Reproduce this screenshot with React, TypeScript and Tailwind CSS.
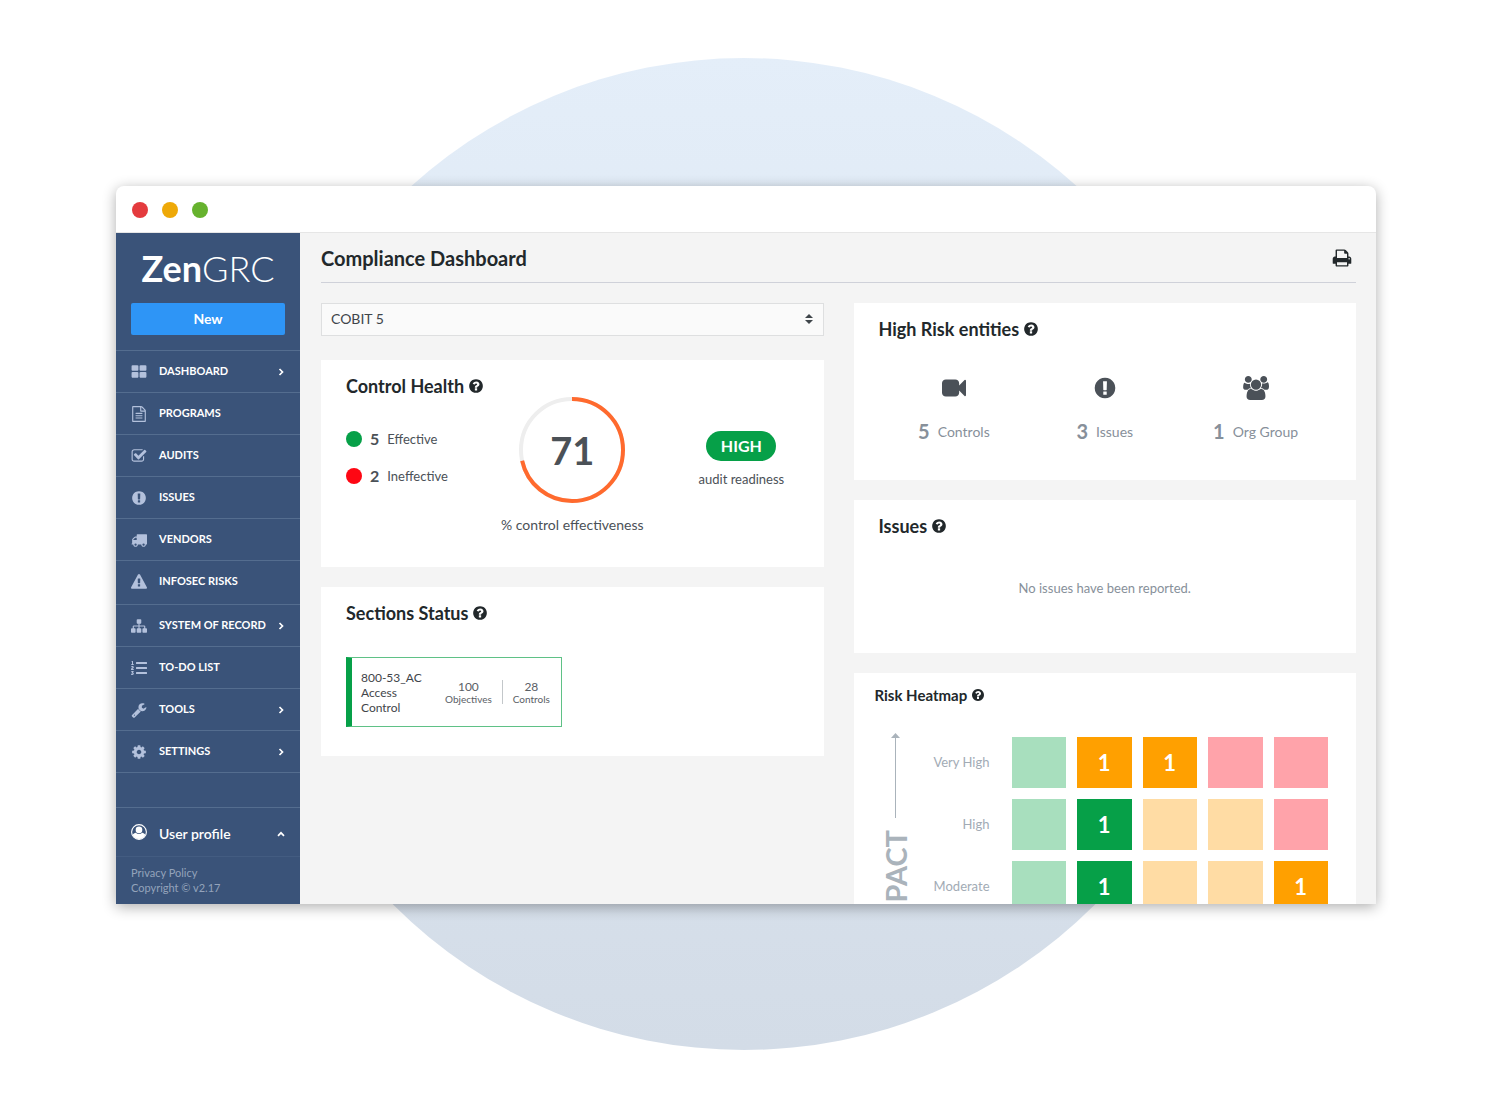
import type { ReactNode } from "react";
import { FaListOl } from "react-icons/fa";

const paths = {
  question:
    "M1024 1376v-192q0-14-9-23t-23-9h-192q-14 0-23 9t-9 23v192q0 14 9 23t23 9h192q14 0 23-9t9-23zm256-672q0-88-55.5-163t-138.5-116-170-41q-243 0-371 213-15 24 8 42l132 100q7 6 19 6 16 0 25-12 53-68 86-92 34-24 86-24 48 0 85.5 26t37.5 59q0 38-20 61t-68 45q-63 28-115.5 86.5t-52.5 125.5v36q0 14 9 23t23 9h192q14 0 23-9t9-23q0-19 21.5-49.5t54.5-49.5q32-18 49-28.5t46-35 44.5-48 28-60.5 12.5-81zm384 192q0 209-103 385.5t-279.5 279.5-385.5 103-385.5-103-279.5-279.5-103-385.5 103-385.5 279.5-279.5 385.5-103 385.5 103 279.5 279.5 103 385.5z",
  exclamation:
    "M896 128q209 0 385.5 103t279.5 279.5 103 385.5-103 385.5-279.5 279.5-385.5 103-385.5-103-279.5-279.5-103-385.5 103-385.5 279.5-279.5 385.5-103zm128 1247v-190q0-14-9-23.5t-22-9.5h-192q-13 0-23 10t-10 23v190q0 13 10 23t23 10h192q13 0 22-9.5t9-23.5zm-2-344l18-621q0-12-10-18-10-8-24-8h-220q-14 0-24 8-10 6-10 18l17 621q0 10 10 17.5t24 7.5h185q14 0 23.5-7.5t10.5-17.5z",
  tiles:
    "M832 1024v384q0 52-38 90t-90 38h-512q-52 0-90-38t-38-90v-384q0-52 38-90t90-38h512q52 0 90 38t38 90zm0-768v384q0 52-38 90t-90 38h-512q-52 0-90-38t-38-90v-384q0-52 38-90t90-38h512q52 0 90 38t38 90zm896 768v384q0 52-38 90t-90 38h-512q-52 0-90-38t-38-90v-384q0-52 38-90t90-38h512q52 0 90 38t38 90zm0-768v384q0 52-38 90t-90 38h-512q-52 0-90-38t-38-90v-384q0-52 38-90t90-38h512q52 0 90 38t38 90z",
  file: "M1596 380q28 28 48 76t20 88v1152q0 40-28 68t-68 28h-1344q-40 0-68-28t-28-68v-1600q0-40 28-68t68-28h896q40 0 88 20t76 48zm-444-244v376h376q-10-29-22-41l-313-313q-12-12-41-22zm384 1528v-1024h-416q-40 0-68-28t-28-68v-416h-768v1536h1280zm-1024-864q0-14 9-23t23-9h704q14 0 23 9t9 23v64q0 14-9 23t-23 9h-704q-14 0-23-9t-9-23v-64zm736 224q14 0 23 9t9 23v64q0 14-9 23t-23 9h-704q-14 0-23-9t-9-23v-64q0-14 9-23t23-9h704zm0 256q14 0 23 9t9 23v64q0 14-9 23t-23 9h-704q-14 0-23-9t-9-23v-64q0-14 9-23t23-9h704z",
  check:
    "M1472 930v318q0 119-84.5 203.5t-203.5 84.5h-832q-119 0-203.5-84.5t-84.5-203.5v-832q0-119 84.5-203.5t203.5-84.5h832q63 0 117 25 15 7 18 23 3 17-9 29l-49 49q-10 10-23 10-3 0-9-2-23-6-45-6h-832q-66 0-113 47t-47 113v832q0 66 47 113t113 47h832q66 0 113-47t47-113v-254q0-13 9-22l64-64q10-10 23-10 6 0 12 3 20 8 20 29zm231-489l-814 814q-24 24-57 24t-57-24l-430-430q-24-24-24-57t24-57l110-110q24-24 57-24t57 24l263 263 647-647q24-24 57-24t57 24l110 110q24 24 24 57t-24 57z",
  truck:
    "M640 1408q0-52-38-90t-90-38-90 38-38 90 38 90 90 38 90-38 38-90zm-384-512h384v-256h-158q-13 0-22 9l-195 195q-9 9-9 22v30zm1280 512q0-52-38-90t-90-38-90 38-38 90 38 90 90 38 90-38 38-90zm256-1088v1024q0 15-4 26.5t-13.5 18.5-16.5 11.5-23.5 6-22.5 2-25.5 0-22.5-.5q0 106-75 181t-181 75-181-75-75-181h-384q0 106-75 181t-181 75-181-75-75-181h-64q-3 0-22.5.5t-25.5 0-22.5-2-23.5-6-16.5-11.5-13.5-18.5-4-26.5q0-26 19-45t45-19v-320q0-8-.5-35t0-38 2.5-34.5 6.5-37 14-30.5 22.5-30l198-198q19-19 50.5-32t58.5-13h160v-192q0-26 19-45t45-19h1024q26 0 45 19t19 45z",
  warning:
    "M1024 1375v-190q0-14-9.5-23.5t-22.5-9.5h-192q-13 0-22.5 9.5t-9.5 23.5v190q0 14 9.5 23.5t22.5 9.5h192q13 0 22.5-9.5t9.5-23.5zm-2-374l18-459q0-12-10-19-13-11-24-11h-220q-11 0-24 11-10 7-10 21l17 457q0 10 10 16.5t24 6.5h185q14 0 23.5-6.5t10.5-16.5zm-14-934l768 1408q35 63-2 126-17 29-46.5 46t-63.5 17h-1536q-34 0-63.5-17t-46.5-46q-37-63-2-126l768-1408q17-31 47-49t65-18 65 18 47 49z",
  sitemap:
    "M1792 1248v320q0 40-28 68t-68 28h-320q-40 0-68-28t-28-68v-320q0-40 28-68t68-28h96v-192h-512v192h96q40 0 68 28t28 68v320q0 40-28 68t-68 28h-320q-40 0-68-28t-28-68v-320q0-40 28-68t68-28h96v-192h-512v192h96q40 0 68 28t28 68v320q0 40-28 68t-68 28h-320q-40 0-68-28t-28-68v-320q0-40 28-68t68-28h96v-192q0-52 38-90t90-38h512v-192h-96q-40 0-68-28t-28-68v-320q0-40 28-68t68-28h320q40 0 68 28t28 68v320q0 40-28 68t-68 28h-96v192h512q52 0 90 38t38 90v192h96q40 0 68 28t28 68z",
  wrench:
    "M448 1472q0-26-19-45t-45-19-45 19-19 45 19 45 45 19 45-19 19-45zm644-420l-682 682q-37 37-90 37-52 0-91-37l-106-108q-38-36-38-90 0-53 38-91l681-681q39 98 114.5 173.5t173.5 114.5zm634-435q0 39-23 106-47 134-164.5 217.5t-258.5 83.5q-185 0-316.5-131.5t-131.5-316.5 131.5-316.5 316.5-131.5q58 0 121.5 16.5t107.5 46.5q16 11 16 28t-16 28l-293 169v224l193 107q5-3 79-48.5t135.5-81 70.5-35.5q15 0 23.5 10t8.5 25z",
  cog: "M1152 896q0-106-75-181t-181-75-181 75-75 181 75 181 181 75 181-75 75-181zm512-109v222q0 12-8 23t-20 13l-185 28q-19 54-39 91 35 50 107 138 10 12 10 25t-9 23q-27 37-99 108t-94 71q-12 0-26-9l-138-108q-44 23-91 38-16 136-29 186-7 28-36 28h-222q-14 0-24.5-8.5t-11.5-21.5l-28-184q-49-16-90-37l-141 107q-10 9-25 9-14 0-25-11-126-114-165-168-7-10-7-23 0-12 8-23 15-21 51-66.5t54-70.5q-27-50-41-99l-183-27q-13-2-21-12.5t-8-23.5v-222q0-12 8-23t19-13l186-28q14-46 39-92-40-57-107-138-10-12-10-24 0-10 9-23 26-36 98.5-107.5t94.5-71.5q13 0 26 10l138 107q44-23 91-38 16-136 29-186 7-28 36-28h222q14 0 24.5 8.5t11.5 21.5l28 184q49 16 90 37l142-107q9-9 24-9 13 0 25 10 129 119 165 170 7 8 7 22 0 12-8 23-15 21-51 66.5t-54 70.5q26 50 41 98l183 28q13 2 21 12.5t8 23.5z",
  video:
    "M1792 352v1088q0 42-39 59-13 5-25 5-27 0-45-19l-403-403v166q0 119-84.5 203.5t-203.5 84.5h-704q-119 0-203.5-84.5t-84.5-203.5v-704q0-119 84.5-203.5t203.5-84.5h704q119 0 203.5 84.5t84.5 203.5v165l403-402q18-19 45-19 12 0 25 5 39 17 39 59z",
  print:
    "M448 1536h896v-256h-896v256zm0-640h896v-384h-160q-40 0-68-28t-28-68v-160h-640v640zm1152 64q0-26-19-45t-45-19-45 19-19 45 19 45 45 19 45-19 19-45zm128 0v416q0 13-9.5 22.5t-22.5 9.5h-224v160q0 40-28 68t-68 28h-960q-40 0-68-28t-28-68v-160h-224q-13 0-22.5-9.5t-9.5-22.5v-416q0-79 56.5-135.5t135.5-56.5h64v-544q0-40 28-68t68-28h672q40 0 88 20t76 48l152 152q28 28 48 76t20 88v256h64q79 0 135.5 56.5t56.5 135.5z",
  users:
    "M657 896q-162 5-265 128h-134q-82 0-138-40.5t-56-118.5q0-353 124-353 6 0 43.5 21t97.5 42.5 119 21.5q67 0 133-23-5 37-5 66 0 159 93 293zm1071 637q0 120-73 189.5t-194 69.5h-874q-121 0-194-69.5t-73-189.5q0-53 3.5-103.5t14-109 26.5-108.5 43-97.5 62-81 85.5-53.5 111.5-20q10 0 43 21.5t73 48 107 48 135 21.5 135-21.5 107-48 73-48 43-21.5q61 0 111.5 20t85.5 53.5 62 81 43 97.5 26.5 108.5 14 109 3.5 103.5zm-1024-1277q0 106-75 181t-181 75-181-75-75-181 75-181 181-75 181 75 75 181zm704 384q0 159-112.5 271.5t-271.5 112.5-271.5-112.5-112.5-271.5 112.5-271.5 271.5-112.5 271.5 112.5 112.5 271.5zm576 225q0 78-56 118.5t-138 40.5h-134q-103-123-265-128 93-134 93-293 0-29-5-66 66 23 133 23 59 0 119-21.5t97.5-42.5 43.5-21q124 0 124 353zm-128-609q0 106-75 181t-181 75-181-75-75-181 75-181 181-75 181 75 75 181z",
};

type IconName = keyof typeof paths;

function Icon({ name, className }: { name: IconName; className: string }) {
  return (
    <svg
      viewBox={name === "users" ? "0 0 2048 1792" : "0 0 1792 1792"}
      className={className}
      fill="currentColor"
      aria-hidden="true"
    >
      <path d={paths[name]} />
    </svg>
  );
}

function Chevron({ up = false }: { up?: boolean }) {
  return (
    <svg viewBox="0 0 8 8" className="size-2" fill="none" stroke="currentColor" strokeWidth="1.7" aria-hidden="true">
      <path d={up ? "M1 5.8 4 2.8 7 5.8" : "M2.5 1 5.5 4 2.5 7"} />
    </svg>
  );
}

type NavItem = { label: string; icon: IconName | "list"; more?: boolean; tall?: boolean };

const navItems: NavItem[] = [
  { label: "DASHBOARD", icon: "tiles", more: true },
  { label: "PROGRAMS", icon: "file" },
  { label: "AUDITS", icon: "check" },
  { label: "ISSUES", icon: "exclamation" },
  { label: "VENDORS", icon: "truck" },
  { label: "INFOSEC RISKS", icon: "warning", tall: true },
  { label: "SYSTEM OF RECORD", icon: "sitemap", more: true },
  { label: "TO-DO LIST", icon: "list" },
  { label: "TOOLS", icon: "wrench", more: true },
  { label: "SETTINGS", icon: "cog", more: true },
];

function Sidebar() {
  return (
    <aside className="flex w-[184px] shrink-0 flex-col bg-[#3a5379] text-white">
      <div className="px-[15px] pb-[15px]">
        <div className="flex h-[70px] items-center justify-center text-4xl leading-none">
          <span className="font-bold">Zen</span>
          <span className="font-light">GRC</span>
        </div>
        <button type="button" className="h-8 w-full rounded-xs bg-[#2e95f6] text-sm font-bold">
          New
        </button>
      </div>
      <nav className="border-b border-[#546d8f]">
        {navItems.map((item) => (
          <a
            key={item.label}
            href="#"
            className={`flex items-center border-t border-[#546d8f] px-[15px] ${item.tall ? "h-[44px] pb-0.5" : "h-[42px]"}`}
          >
            <span className="w-7 text-[#b3c1dc]">
              {item.icon === "list" ? <FaListOl className="size-4" /> : <Icon name={item.icon} className="size-4" />}
            </span>
            <span className="flex-1 text-[11px] font-bold whitespace-nowrap">{item.label}</span>
            {item.more && <Chevron />}
          </a>
        ))}
      </nav>
      <div className="mt-[34px] border-t border-[#546d8f]">
        <button type="button" className="flex h-12 w-full items-center px-[15px] text-left">
          <span className="w-7">
            <svg viewBox="0 0 16 16" className="size-4" aria-hidden="true">
              <circle cx="8" cy="8" r="7.4" fill="none" stroke="currentColor" strokeWidth="1.1" />
              <circle cx="8" cy="5.9" r="3.3" fill="currentColor" />
              <path d="M1.600 10.800C2.400 9.500 3.600 8.900 4.800 8.700c1.800 1.700 4.600 1.700 6.400 0 1.200.2 2.400.8 3.200 2.100A7 7 0 0 1 1.600 10.800z" fill="currentColor" />
            </svg>
          </span>
          <span className="flex-1 pt-1 text-sm font-semibold">User profile</span>
          <span className="pt-1">
            <Chevron up />
          </span>
        </button>
      </div>
      <footer className="flex flex-1 flex-col border-t border-[#435c81] px-[15px] pt-2 text-[11px] leading-[15px] text-[#94a3bb]">
        <a href="#">Privacy Policy</a>
        <span>Copyright © v2.17</span>
      </footer>
    </aside>
  );
}

function Card({ title, small = false, className, children }: { title: string; small?: boolean; className: string; children: ReactNode }) {
  return (
    <section className={`bg-white ${className}`}>
      <h2
        className={`flex h-5 items-center gap-1 font-bold text-[#22282b] ${small ? "text-[15px]" : "text-lg"}`}
      >
        {title}
        <Icon name="question" className={small ? "size-3.5" : "size-4"} />
      </h2>
      {children}
    </section>
  );
}

const health = [
  { count: 5, label: "Effective", dot: "bg-[#06a048]" },
  { count: 2, label: "Ineffective", dot: "bg-[#fe0713]" },
];

function ControlHealth() {
  const radius = 51;
  const length = 2 * Math.PI * radius;
  return (
    <Card title="Control Health" className="min-h-[207px] px-[25px] pt-4">
      <div className="mt-px grid grid-cols-[1fr_140px_1fr] text-[#4b5157]">
        <ul className="pt-[23px]">
          {health.map((row) => (
            <li key={row.label} className="flex h-[37px] items-center">
              <span className={`size-4 rounded-full ${row.dot}`} />
              <span className="ml-2 text-base font-bold">{row.count}</span>
              <span className="ml-2 pt-0.5 text-[13px]">{row.label}</span>
            </li>
          ))}
        </ul>
        <div className="flex flex-col items-center">
          <div className="grid place-items-center">
            <svg viewBox="0 0 106 106" className="col-start-1 row-start-1 size-[106px] -rotate-90" fill="none" strokeWidth="4" aria-hidden="true">
              <circle cx="53" cy="53" r={radius} stroke="#eeeeee" />
              <circle cx="53" cy="53" r={radius} stroke="#ff6a2e" strokeDasharray={`${length * 0.715} ${length}`} />
            </svg>
            <span className="col-start-1 row-start-1 text-[38px] leading-none font-bold">71</span>
          </div>
          <p className="mt-3.5 text-sm leading-4 whitespace-nowrap">% control effectiveness</p>
        </div>
        <div className="flex flex-col items-center pt-[34px] pl-[42px]">
          <span className="flex h-[30px] w-[70px] items-center justify-center rounded-full bg-[#06a048] text-base font-bold text-white">
            HIGH
          </span>
          <p className="mt-2.5 text-[13px] leading-4 whitespace-nowrap">audit readiness</p>
        </div>
      </div>
    </Card>
  );
}

function SectionsStatus() {
  return (
    <Card title="Sections Status" className="min-h-[169px] px-[25px] pt-4">
      <a
        href="#"
        className="mt-[34px] flex h-[70px] w-[216px] items-center border border-l-6 border-[#5fc186] border-l-[#06a048] pl-[9px] text-xs text-[#3f454a]"
      >
        <span className="w-[84px] leading-[15px]">
          800-53_AC
          <br />
          Access
          <br />
          Control
        </span>
        <span className="flex flex-col items-center leading-[13px] text-[#5a6066]">
          100 <span className="text-[10px] leading-3">Objectives</span>
        </span>
        <span className="mx-2.5 h-6 border-l border-[#c3c7ca]" />
        <span className="flex flex-col items-center leading-[13px] text-[#5a6066]">
          28 <span className="text-[10px] leading-3">Controls</span>
        </span>
      </a>
    </Card>
  );
}

const entities: { icon: IconName; iconClass: string; count: number; label: string }[] = [
  { icon: "video", iconClass: "size-6", count: 5, label: "Controls" },
  { icon: "exclamation", iconClass: "size-6", count: 3, label: "Issues" },
  { icon: "users", iconClass: "h-6 w-7", count: 1, label: "Org Group" },
];

function HighRisk() {
  return (
    <Card title="High Risk entities" className="min-h-[177px] px-[25px] pt-4">
      <ul className="mt-[35px] grid grid-cols-3">
        {entities.map((e) => (
          <li key={e.label} className="flex flex-col items-center">
            <span className="flex h-7 items-center text-[#4b5158]">
              <Icon name={e.icon} className={e.iconClass} />
            </span>
            <span className="mt-4 flex items-center gap-2 text-[#87909a]">
              <b className="text-xl leading-6">{e.count}</b>
              <span className="pt-0.5 text-sm leading-6">{e.label}</span>
            </span>
          </li>
        ))}
      </ul>
    </Card>
  );
}

const tones = {
  g: "bg-[#a8dfbe]",
  G: "bg-[#06a048]",
  o: "bg-[#ffdca4]",
  O: "bg-[#ffa000]",
  r: "bg-[#ffa3aa]",
};

const heatRows: { label: string; cells: (keyof typeof tones)[] }[] = [
  { label: "Very High", cells: ["g", "O", "O", "r", "r"] },
  { label: "High", cells: ["g", "G", "o", "o", "r"] },
  { label: "Moderate", cells: ["g", "G", "o", "o", "O"] },
];

function Heatmap() {
  return (
    <Card title="Risk Heatmap" small className="pt-3 pl-[21px]">
      <div className="mt-[21px] flex gap-1 pr-[17px] pl-[6px]">
        <div className="flex w-[30px] shrink-0 flex-col items-center pt-[7px] text-[#aab3bb]">
          <svg viewBox="0 0 9 5" className="h-[5px] w-[9px]" fill="currentColor" aria-hidden="true">
            <path d="M0 5 4.500 0 9 5z" />
          </svg>
          <span className="h-20 border-l border-[#aab3bb]" />
          <span className="mt-3 rotate-180 text-[29px] leading-[30px] font-bold [writing-mode:vertical-rl]">IMPACT</span>
        </div>
        <div className="min-w-0 flex-1">
          <table className="w-full table-fixed border-separate border-spacing-[11px]">
            <tbody>
              {heatRows.map((row) => (
                <tr key={row.label}>
                  <th scope="row" className="w-[75px] p-0 pr-[11px] text-right text-[13px] font-normal whitespace-nowrap text-[#a2abb5]">
                    {row.label}
                  </th>
                  {row.cells.map((tone, i) => (
                    <td key={i} className={`h-[51px] p-0 text-center text-[22px] leading-none font-bold text-white ${tones[tone]}`}>
                      {tone === "G" || tone === "O" ? 1 : null}
                    </td>
                  ))}
                </tr>
              ))}
            </tbody>
          </table>
        </div>
      </div>
    </Card>
  );
}

export default function App() {
  return (
    <div className="relative min-h-screen overflow-hidden bg-white px-[116px] pt-[186px] font-['Lato',sans-serif]">
      <div className="absolute top-[58px] left-[calc(50%-498px)] size-[992px] rounded-full bg-linear-to-b from-[#e4eef9] to-[#d3dce7]" />
      <div className="relative flex h-[calc(100vh-390px)] flex-col overflow-hidden rounded-t-lg bg-white shadow-[0_3px_14px_rgba(0,0,0,0.32)]">
        <div className="flex h-[47px] shrink-0 items-center gap-3.5 border-b border-[#e6e6e6] px-4 pt-0.5">
          <span className="size-4 rounded-full bg-[#e43b3e]" />
          <span className="size-4 rounded-full bg-[#eea908]" />
          <span className="size-4 rounded-full bg-[#66b22e]" />
        </div>
        <div className="flex min-h-0 flex-1">
          <Sidebar />
          <main className="min-w-0 flex-1 overflow-hidden bg-[#f4f4f4] pr-5 pl-[21px]">
            <header className="flex h-[50px] items-center justify-between border-b border-[#cfd1d9] pr-1">
              <h1 className="text-xl font-bold text-[#22282b]">Compliance Dashboard</h1>
              <button type="button" aria-label="Print" className="text-[#22282b]">
                <Icon name="print" className="size-5" />
              </button>
            </header>
            <div className="mt-5 grid grid-cols-2 items-start gap-[30px]">
              <div className="flex flex-col gap-5">
                <div className="relative mb-1 text-[#3f454a]">
                  <select
                    aria-label="Program"
                    className="h-[33px] w-full appearance-none border border-[#dedfe0] bg-[#fafafa] px-[9px] pb-0.5 text-sm"
                  >
                    <option>COBIT 5</option>
                  </select>
                  <svg viewBox="0 0 8 10" className="pointer-events-none absolute top-[11px] right-[11px] h-2.5 w-2" fill="currentColor" aria-hidden="true">
                    <path d="M0 4 4 0 8 4zM0 6h8L4 10z" />
                  </svg>
                </div>
                <ControlHealth />
                <SectionsStatus />
              </div>
              <div className="flex flex-col gap-5">
                <HighRisk />
                <Card title="Issues" className="min-h-[153px] px-[25px] pt-4">
                  <p className="mt-[42px] text-center text-[13px] leading-5 text-[#87909a]">No issues have been reported.</p>
                </Card>
                <Heatmap />
              </div>
            </div>
          </main>
        </div>
      </div>
    </div>
  );
}
